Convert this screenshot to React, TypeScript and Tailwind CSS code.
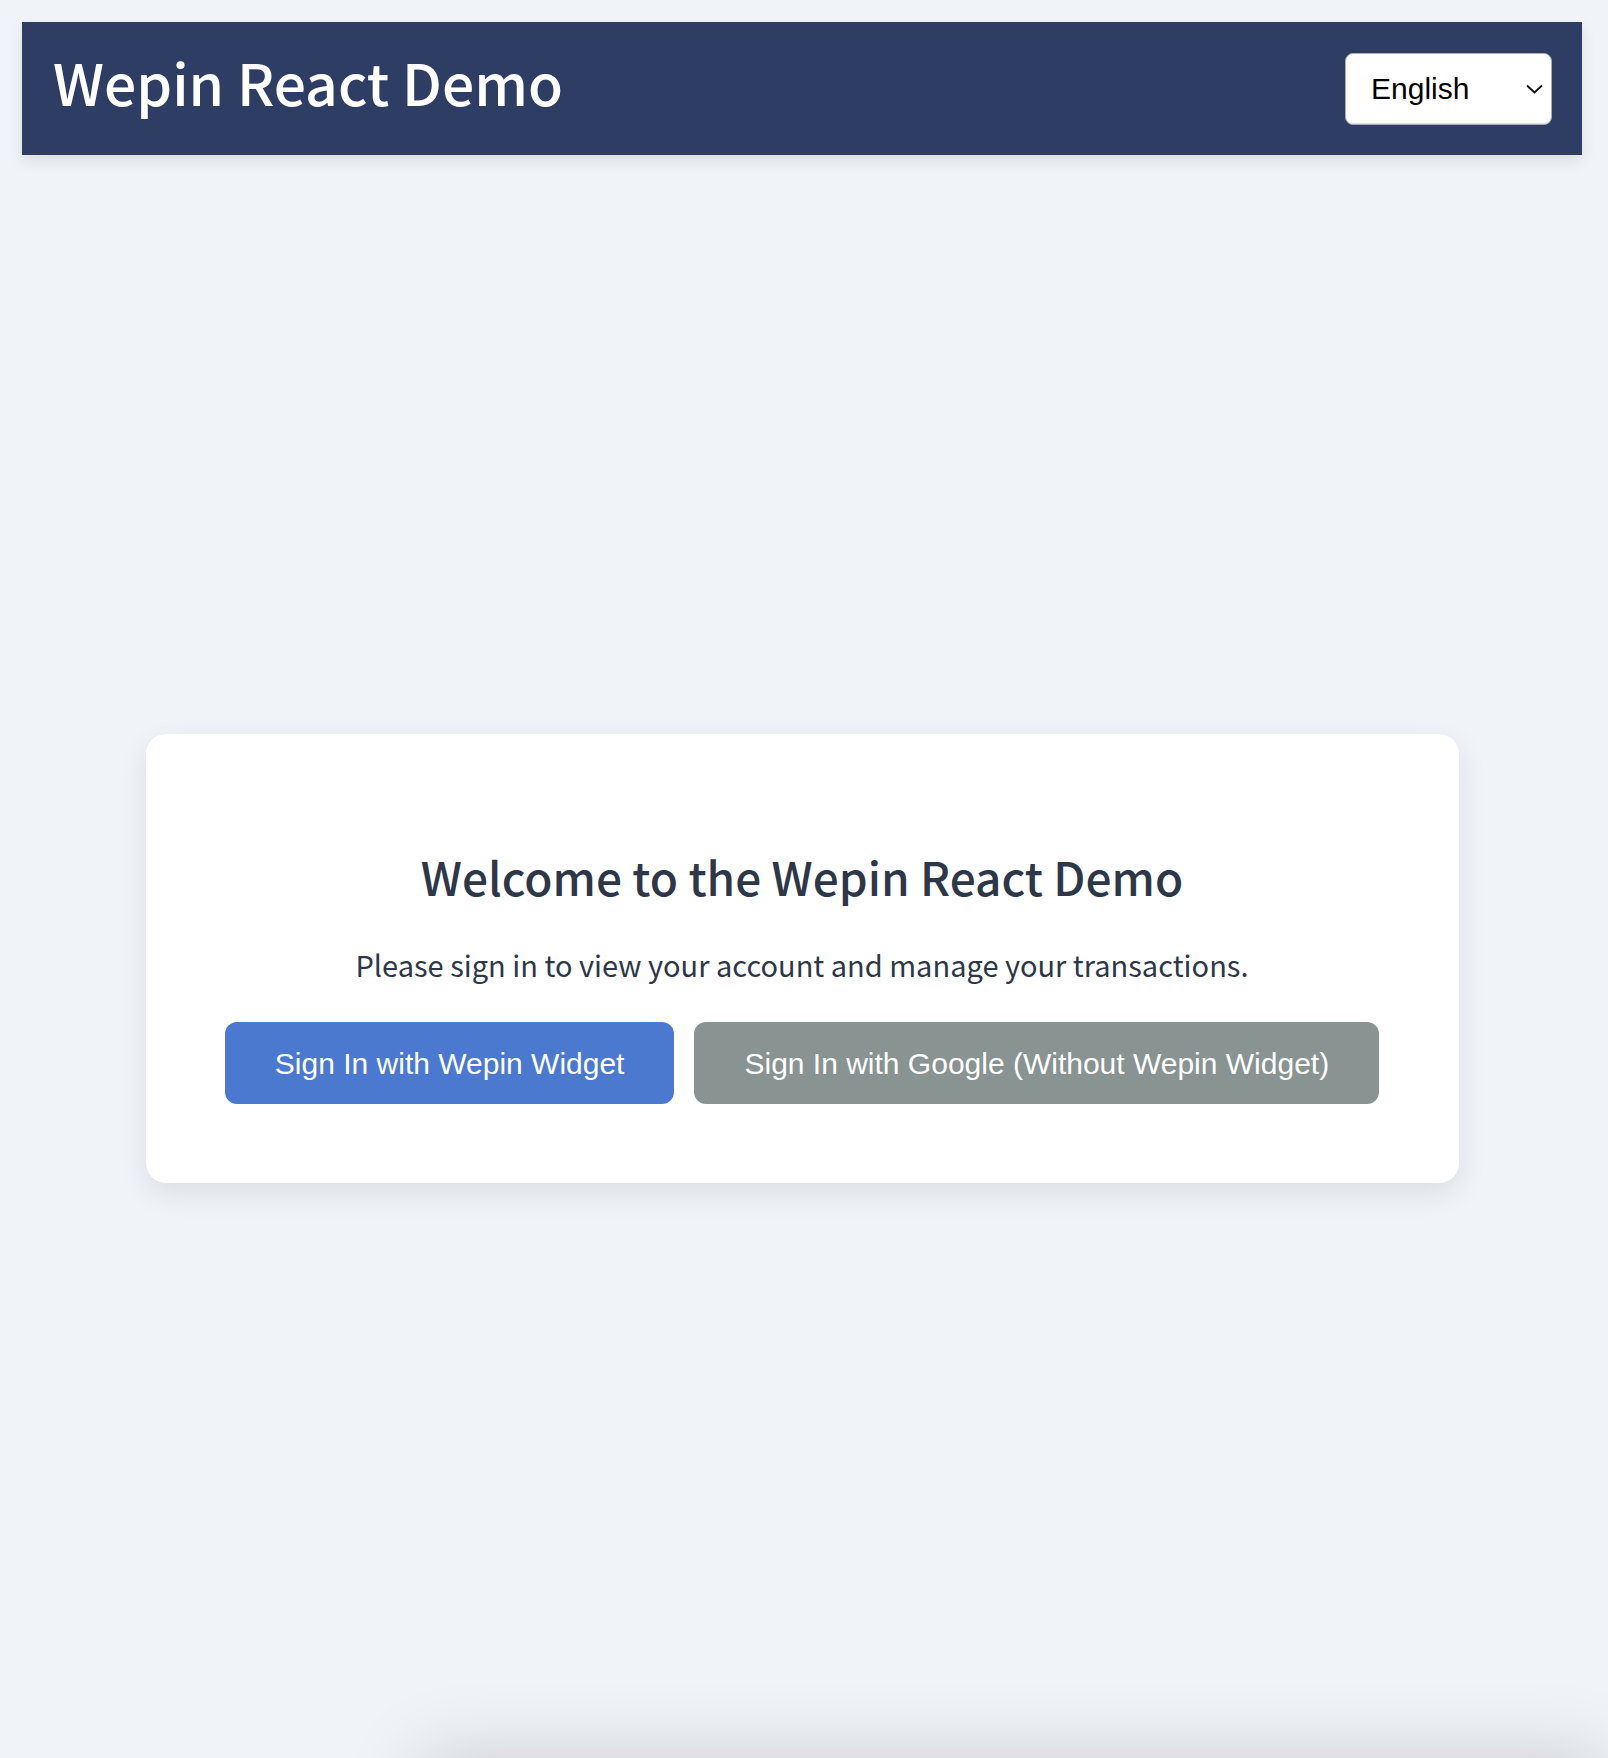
import React from "react";

export default function App() {
  return (
    <div className="bg-[#f0f3f8]">
      <div className="min-h-screen flex flex-col pl-[22px] pr-[26px] pt-[22px]">
        <header className="h-[133px] bg-[#2e3d63] flex items-center justify-between pl-[31px] pr-[30px] shadow-[0_6px_14px_rgba(0,0,0,0.09)]">
          <h1 className="text-white text-[57px] font-medium leading-none font-['Noto_Sans_CJK_KR','Noto_Sans',sans-serif] -mt-[15px]">
            Wepin React Demo
          </h1>
          <div className="w-[207px] h-[72px] bg-white rounded-[8px] border border-[#a9adb3] shadow-[inset_0_-1px_0_rgba(0,0,0,0.12)] flex items-center justify-between pl-[25px] pr-[8px]">
            <span className="text-[30px] text-black font-['Liberation_Sans',Arial,sans-serif] leading-none">
              English
            </span>
            <svg width="17" height="10" viewBox="0 0 17 10" fill="none">
              <path d="M1 1.5 L8.5 8.5 L16 1.5" stroke="#111" strokeWidth="1.8" />
            </svg>
          </div>
        </header>
        <main className="flex-1 flex items-center justify-center pt-[4px]">
          <div className="w-[1313px] h-[449px] bg-white rounded-[20px] shadow-[0_10px_30px_rgba(0,0,0,0.09)] flex flex-col items-center pt-[119px]">
            <h2 className="text-[#2d3748] text-[46px] font-medium leading-none font-['Noto_Sans_CJK_KR','Noto_Sans',sans-serif]">
              Welcome to the Wepin React Demo
            </h2>
            <p className="text-[#2d3748] text-[29px] leading-none mt-[51px] font-['Noto_Sans_CJK_KR','Noto_Sans',sans-serif]">
              Please sign in to view your account and manage your transactions.
            </p>
            <div className="flex gap-[20px] mt-[43px]">
              <button className="h-[82px] px-[50px] rounded-[12px] bg-[#4b79cf] text-white text-[30px] font-['Liberation_Sans',Arial,sans-serif]">
                Sign In with Wepin Widget
              </button>
              <button className="h-[82px] px-[50px] rounded-[12px] bg-[#889392] text-white text-[30px] font-['Liberation_Sans',Arial,sans-serif]">
                Sign In with Google (Without Wepin Widget)
              </button>
            </div>
          </div>
        </main>
      </div>
      <div className="ml-[420px] h-[200px] bg-white shadow-[0_0_80px_rgba(0,0,0,0.16)]"></div>
    </div>
  );
}
